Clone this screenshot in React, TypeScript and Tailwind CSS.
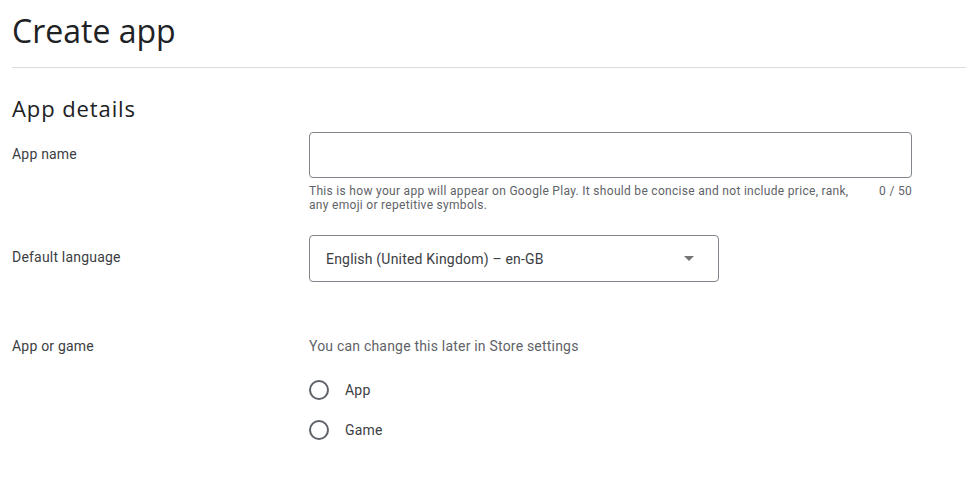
import React from "react";

const heading = { fontFamily: '"Open Sans", "Noto Sans", sans-serif' };

const Radio = ({ label }: { label: string }) => (
    <label className="flex items-center h-10 cursor-pointer">
        <span className="w-5 h-5 rounded-full border-2 border-[#5f6368] shrink-0" />
        <span className="ml-4 text-sm tracking-[0.2px] text-[#3c4043]">{label}</span>
    </label>
);

export default function App() {
    return (
        <div className="bg-white min-h-screen text-[#3c4043]" style={{ fontFamily: 'Roboto, "Liberation Sans", sans-serif' }}>
            <div className="pl-3">
                <h1 className="text-[32px] leading-[40px] pt-[11px] pb-[16px] text-[#202124]" style={heading}>
                    Create app
                </h1>
                <div className="border-t border-[#dadce0]" />
                <h2 className="text-[22px] leading-[28px] pt-[26px] font-medium tracking-[0.9px] text-[#202124]" style={heading}>
                    App details
                </h2>

                <div className="grid grid-cols-[297px_603px] mt-[10px] text-sm tracking-[0.2px]">
                    {/* App name */}
                    <div className="pt-[12px]">App name</div>
                    <div>
                        <input
                            className="w-full h-[46px] border border-[#80868b] rounded-[4px] px-4 text-sm outline-none"
                            type="text"
                        />
                        <div className="flex justify-between text-xs leading-[14px] tracking-[0.3px] text-[#5f6368] mt-[6px]">
                            <p className="w-[545px]">
                                This is how your app will appear on Google Play. It should be concise and not include price, rank, any emoji or repetitive symbols.
                            </p>
                            <span>0 / 50</span>
                        </div>
                    </div>

                    {/* Default language */}
                    <div className="pt-[35px]">Default language</div>
                    <div className="pt-[23px]">
                        <div className="w-[410px] h-[47px] border border-[#80868b] rounded-[4px] flex items-center justify-between pl-4 pr-[24px]">
                            <span className="text-[#3c4043]">English (United Kingdom) – en-GB</span>
                            <svg width="10" height="5" viewBox="0 0 10 5">
                                <path d="M0 0 L5 5 L10 0 Z" fill="#757575" />
                            </svg>
                        </div>
                    </div>

                    {/* App or game */}
                    <div className="pt-[54px]">App or game</div>
                    <div className="pt-[54px]">
                        <p className="text-[#5f6368]">You can change this later in Store settings</p>
                        <div className="mt-[14px] flex flex-col">
                            <Radio label="App" />
                            <Radio label="Game" />
                        </div>
                    </div>
                </div>
            </div>
        </div>
    );
}
